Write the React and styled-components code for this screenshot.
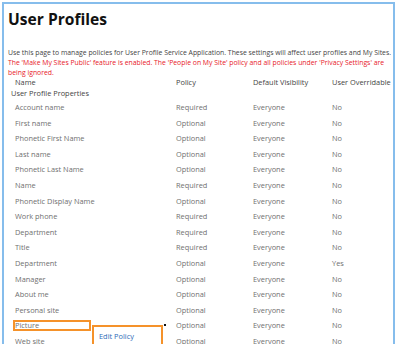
import React from "react";
import styled, { createGlobalStyle } from "styled-components";

const Global = createGlobalStyle`
  html, body { margin: 0; padding: 0; background: #fff; overflow: hidden; }
  body { font-family: "Open Sans", "Noto Sans", sans-serif; }
`;

const Frame = styled.div`
  box-sizing: border-box;
  margin: 2px 0 0 2px;
  width: 393px;
  height: 342px;
  overflow: hidden;
  border: 2px solid #86bdec;
  border-bottom: none;
  padding: 0 0 0 4px;
`;

const Title = styled.h1`
  margin: 0;
  padding-top: 5px;
  font-size: 15.6px;
  line-height: 20px;
  font-weight: 700;
  color: #111;
`;

const Desc = styled.div`
  margin-top: 19px;
  font-size: 6.85px;
  line-height: 10px;
  white-space: nowrap;
`;

const Line = styled.div`
  color: ${(p) => (p.$warn ? "#e8202a" : "#444")};
`;

const Table = styled.div`
  margin-top: -1.5px;
  display: grid;
  grid-template-columns: 168px 77px 79px 1fr;
  font-size: 7.4px;
  position: relative;
`;

const HeadCell = styled.div`
  color: #444;
  line-height: 11px;
  padding-left: ${(p) => (p.$first ? "7px" : "0")};
`;

const Group = styled.div`
  grid-column: 1 / -1;
  color: #444;
  line-height: 11px;
  padding-left: 3px;
  margin-bottom: 1.5px;
`;

const Cell = styled.div`
  color: #707070;
  height: 15.6px;
  line-height: 15.6px;
  padding-left: ${(p) => (p.$first ? "7px" : "0")};
  position: relative;
`;

const Highlight = styled.span`
  position: absolute;
  left: 4.5px;
  top: 2px;
  width: 78.5px;
  height: 11px;
  box-sizing: border-box;
  border: 2px solid #f5922a;
`;

const Dot = styled.span`
  position: absolute;
  left: 156px;
  top: 6px;
  width: 2px;
  height: 2px;
  background: #111;
`;

const Menu = styled.div`
  position: absolute;
  left: 84px;
  top: 7px;
  width: 71px;
  height: 40px;
  box-sizing: border-box;
  border: 2px solid #f5922a;
  background: #fff;
  z-index: 2;
  padding: 3px 0 0 5px;
  line-height: 12px;
  color: #2e6cb8;
  font-size: 7.4px;
`;

const rows = [
  ["Account name", "Required", "Everyone", "No"],
  ["First name", "Optional", "Everyone", "No"],
  ["Phonetic First Name", "Optional", "Everyone", "No"],
  ["Last name", "Optional", "Everyone", "No"],
  ["Phonetic Last Name", "Optional", "Everyone", "No"],
  ["Name", "Required", "Everyone", "No"],
  ["Phonetic Display Name", "Optional", "Everyone", "No"],
  ["Work phone", "Required", "Everyone", "No"],
  ["Department", "Required", "Everyone", "No"],
  ["Title", "Required", "Everyone", "No"],
  ["Department", "Optional", "Everyone", "Yes"],
  ["Manager", "Optional", "Everyone", "No"],
  ["About me", "Optional", "Everyone", "No"],
  ["Personal site", "Optional", "Everyone", "No"],
  ["Picture", "Optional", "Everyone", "No"],
  ["Web site", "Optional", "Everyone", "No"],
];

export default function App() {
  return (
    <>
      <Global />
      <Frame>
        <Title>User Profiles</Title>
        <Desc>
          <Line>
            Use this page to manage policies for User Profile Service Application. These settings will affect user profiles and My Sites.
          </Line>
          <Line $warn>
            The 'Make My Sites Public' feature is enabled. The 'People on My Site' policy and all policies under 'Privacy Settings' are
          </Line>
          <Line $warn>being ignored.</Line>
        </Desc>
        <Table>
          <HeadCell $first>Name</HeadCell>
          <HeadCell>Policy</HeadCell>
          <HeadCell>Default Visibility</HeadCell>
          <HeadCell>User Overridable</HeadCell>
          <Group>User Profile Properties</Group>
          {rows.map((r, i) => {
            const picked = r[0] === "Picture";
            return (
              <React.Fragment key={i}>
                <Cell $first>
                  {picked && <Highlight />}
                  {r[0]}
                  {picked && <Dot />}
                  {picked && <Menu>Edit Policy</Menu>}
                </Cell>
                <Cell>{r[1]}</Cell>
                <Cell>{r[2]}</Cell>
                <Cell>{r[3]}</Cell>
              </React.Fragment>
            );
          })}
        </Table>
      </Frame>
    </>
  );
}
